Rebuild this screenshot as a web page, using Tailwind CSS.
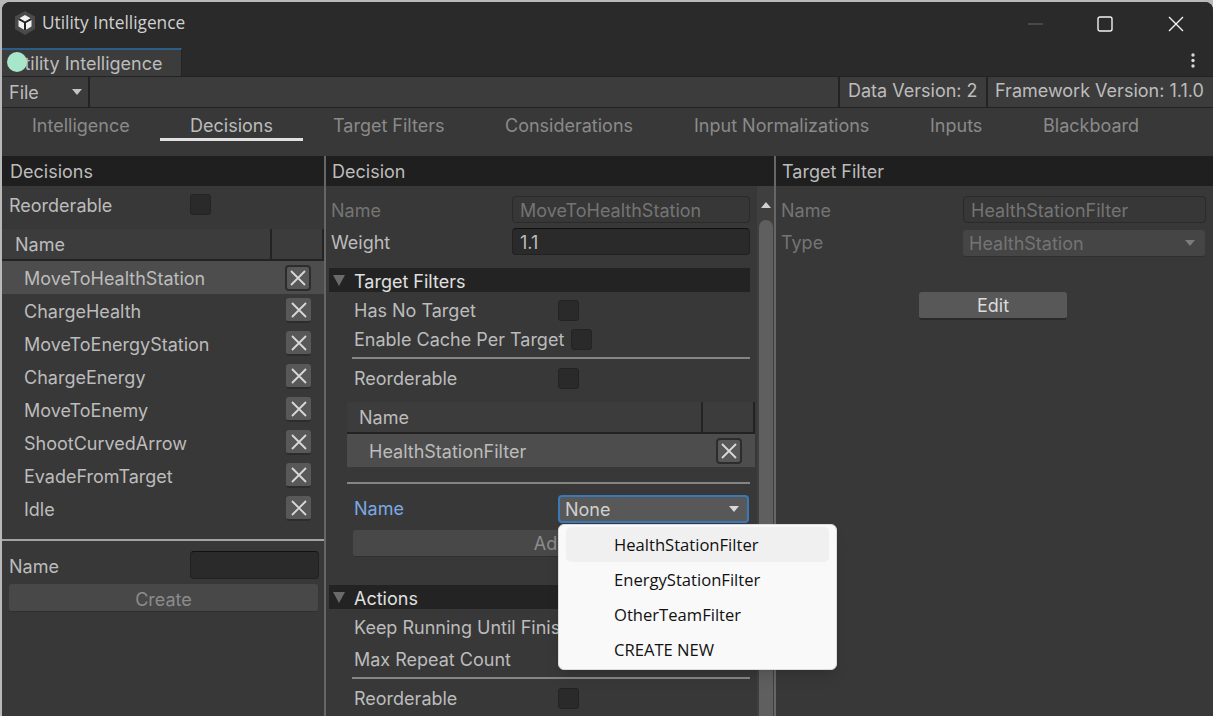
<!DOCTYPE html>
<html lang="en">
<head>
  <meta charset="UTF-8" />
  <title>Utility Intelligence</title>
  <script src="https://cdn.jsdelivr.net/npm/@tailwindcss/browser@4"></script>
</head>
<body class="bg-[#b9b9b9] h-[716px] w-[1213px] overflow-hidden font-['Inter',sans-serif] text-[18px] text-[#bcbcbc]">
  <div class="relative ml-[2px] mt-[2px] h-[714px] w-[1211px] rounded-t-lg bg-[#383838] overflow-hidden">

    <!-- Title bar -->
    <div class="h-[46px] bg-[#2a2a2a] flex items-start">
      <svg class="ml-[12px] mt-[9px] w-[22px] h-[24px]" viewBox="0 0 22 24">
        <path d="M11 0 21 5.5V18L11 24 1 18V5.500Z" fill="#4a4a4a"/>
        <path d="M11 4 17.500 7.800V15.500L11 19.300 4.500 15.500V7.800Z" fill="#f2f2f2"/>
        <path d="M11 11.500V19M11 11.500 4.500 7.800M11 11.500 17.500 7.800" stroke="#222" stroke-width="2" fill="none"/>
      </svg>
      <span class="ml-[6px] mt-[9px] w-[143px] font-['Open_Sans',sans-serif] text-[17.300px] leading-[24px] text-[#d0d0d0] whitespace-nowrap">Utility Intelligence</span>
      <svg class="ml-[843px] mt-[21px] w-[15px] h-[2px]" viewBox="0 0 15 2"><path d="M0 1H15" stroke="#666"/></svg>
      <svg class="ml-[54px] mt-[14px] w-[16px] h-[16px]" viewBox="0 0 16 16"><rect x="1" y="1" width="14" height="14" rx="2" fill="none" stroke="#f2f2f2" stroke-width="1.400"/></svg>
      <svg class="ml-[54px] mt-[13px] w-[18px] h-[18px]" viewBox="0 0 18 18"><path d="M2 2 16 16M16 2 2 16" stroke="#f2f2f2" stroke-width="1.400"/></svg>
    </div>

    <!-- Window tab strip -->
    <div class="h-[28px] bg-[#2a2a2a] flex justify-between">
      <div class="w-[180px] h-[28px] bg-[#3c3c3c] border-t-[2px] border-[#2c5d87] border-r border-r-[#232323] pl-[9px] leading-[27px] overflow-hidden whitespace-nowrap">Utility Intelligence</div>
      <svg class="mt-[4px] mr-[18px] w-[4px] h-[16px]" viewBox="0 0 4 16"><circle cx="2" cy="3" r="1.700" fill="#d8d8d8"/><circle cx="2" cy="8.500" r="1.700" fill="#d8d8d8"/><circle cx="2" cy="14" r="1.700" fill="#d8d8d8"/></svg>
    </div>

    <!-- Toolbar -->
    <div class="h-[32px] bg-[#3c3c3c] border-y border-[#232323] flex">
      <div class="w-[88px] border-r-[2px] border-[#232323] flex items-center justify-between pl-[7px] pr-[6px]">
        <span>File</span>
        <span class="w-0 h-0 border-x-[5px] border-x-transparent border-t-[6px] border-t-[#c4c4c4]"></span>
      </div>
      <div class="flex-1"></div>
      <div class="w-[150px] border-x-[2px] border-[#232323] flex items-center pl-[8px] whitespace-nowrap pb-[4px]">Data Version: 2</div>
      <div class="w-[225px] flex items-center pl-[7px] whitespace-nowrap pb-[4px]">Framework Version: 1.1.0</div>
    </div>

    <!-- Tab row -->
    <div class="h-[48px] flex text-[#8a8a8a]">
      <div class="ml-[30px] w-[97px] pt-[5px] leading-[26px] text-center whitespace-nowrap">Intelligence</div>
      <div class="ml-[31px] w-[143px] h-[33px] pt-[5px] leading-[26px] text-center border-b-[3px] border-[#e0e0e0] text-[#bcbcbc]">Decisions</div>
      <div class="ml-[30px] w-[111px] pt-[5px] leading-[26px] text-center whitespace-nowrap">Target Filters</div>
      <div class="ml-[61px] w-[128px] pt-[5px] leading-[26px] text-center whitespace-nowrap">Considerations</div>
      <div class="ml-[61px] w-[175px] pt-[5px] leading-[26px] text-center whitespace-nowrap">Input Normalizations</div>
      <div class="ml-[61px] w-[52px] pt-[5px] leading-[26px] text-center whitespace-nowrap">Inputs</div>
      <div class="ml-[61px] w-[95px] pt-[5px] leading-[26px] text-center whitespace-nowrap">Blackboard</div>
    </div>

    <!-- Panels -->
    <div class="flex h-[560px]">

      <!-- Decisions list -->
      <div class="w-[322px] shrink-0">
        <div class="h-[30px] bg-[#1f1f1f] pl-[8px] leading-[32px]">Decisions</div>
        <div class="h-[43px] pl-[7px] flex items-start pt-[4px]">
          <span class="w-[181px] leading-[32px]">Reorderable</span>
          <span class="mt-[4px] w-[21px] h-[21px] rounded-[3px] bg-[#2a2a2a] border border-[#232323]"></span>
        </div>
        <div class="h-[32px] bg-[#3c3c3c] border-b-[2px] border-[#232323] flex">
          <div class="w-[270px] pl-[13px] leading-[32px] border-r-[2px] border-[#232323]">Name</div>
          <div class="flex-1 border-r-[2px] border-[#232323]"></div>
        </div>
        <div class="h-[33px] bg-[#4d4d4d] flex items-center justify-between pl-[22px] pr-[13px]">
          <span class="pt-[2px]">MoveToHealthStation</span>
          <span class="w-[26px] h-[26px] rounded-[4px] bg-[#585858] border-[2px] border-[#2c2c2c] flex items-center justify-center"><svg class="w-[16px] h-[16px]" viewBox="0 0 16 16"><path d="M1 1 15 15M15 1 1 15" stroke="#d8d8d8" stroke-width="1.800"/></svg></span>
        </div>
        <div class="h-[33px] flex items-center justify-between pl-[22px] pr-[13px]">
          <span class="pt-[2px]">ChargeHealth</span>
          <span class="w-[25px] h-[25px] rounded-[3px] bg-[#585858] border-b-[2px] border-[#2c2c2c] flex items-center justify-center"><svg class="w-[16px] h-[16px]" viewBox="0 0 16 16"><path d="M1 1 15 15M15 1 1 15" stroke="#d8d8d8" stroke-width="1.800"/></svg></span>
        </div>
        <div class="h-[33px] flex items-center justify-between pl-[22px] pr-[13px]">
          <span class="pt-[2px]">MoveToEnergyStation</span>
          <span class="w-[25px] h-[25px] rounded-[3px] bg-[#585858] border-b-[2px] border-[#2c2c2c] flex items-center justify-center"><svg class="w-[16px] h-[16px]" viewBox="0 0 16 16"><path d="M1 1 15 15M15 1 1 15" stroke="#d8d8d8" stroke-width="1.800"/></svg></span>
        </div>
        <div class="h-[33px] flex items-center justify-between pl-[22px] pr-[13px]">
          <span class="pt-[2px]">ChargeEnergy</span>
          <span class="w-[25px] h-[25px] rounded-[3px] bg-[#585858] border-b-[2px] border-[#2c2c2c] flex items-center justify-center"><svg class="w-[16px] h-[16px]" viewBox="0 0 16 16"><path d="M1 1 15 15M15 1 1 15" stroke="#d8d8d8" stroke-width="1.800"/></svg></span>
        </div>
        <div class="h-[33px] flex items-center justify-between pl-[22px] pr-[13px]">
          <span class="pt-[2px]">MoveToEnemy</span>
          <span class="w-[25px] h-[25px] rounded-[3px] bg-[#585858] border-b-[2px] border-[#2c2c2c] flex items-center justify-center"><svg class="w-[16px] h-[16px]" viewBox="0 0 16 16"><path d="M1 1 15 15M15 1 1 15" stroke="#d8d8d8" stroke-width="1.800"/></svg></span>
        </div>
        <div class="h-[33px] flex items-center justify-between pl-[22px] pr-[13px]">
          <span class="pt-[2px]">ShootCurvedArrow</span>
          <span class="w-[25px] h-[25px] rounded-[3px] bg-[#585858] border-b-[2px] border-[#2c2c2c] flex items-center justify-center"><svg class="w-[16px] h-[16px]" viewBox="0 0 16 16"><path d="M1 1 15 15M15 1 1 15" stroke="#d8d8d8" stroke-width="1.800"/></svg></span>
        </div>
        <div class="h-[33px] flex items-center justify-between pl-[22px] pr-[13px]">
          <span class="pt-[2px]">EvadeFromTarget</span>
          <span class="w-[25px] h-[25px] rounded-[3px] bg-[#585858] border-b-[2px] border-[#2c2c2c] flex items-center justify-center"><svg class="w-[16px] h-[16px]" viewBox="0 0 16 16"><path d="M1 1 15 15M15 1 1 15" stroke="#d8d8d8" stroke-width="1.800"/></svg></span>
        </div>
        <div class="h-[33px] flex items-center justify-between pl-[22px] pr-[13px]">
          <span class="pt-[2px]">Idle</span>
          <span class="w-[25px] h-[25px] rounded-[3px] bg-[#585858] border-b-[2px] border-[#2c2c2c] flex items-center justify-center"><svg class="w-[16px] h-[16px]" viewBox="0 0 16 16"><path d="M1 1 15 15M15 1 1 15" stroke="#d8d8d8" stroke-width="1.800"/></svg></span>
        </div>
        <div class="mt-[14px] h-[2px] bg-[#a3a3a3]"></div>
        <div class="mt-[10px] h-[33px] flex pl-[7px]">
          <span class="w-[181px] leading-[32px]">Name</span>
          <span class="w-[129px] h-[28px] rounded-[4px] bg-[#2a2a2a] border border-[#212121] border-t-[#111]"></span>
        </div>
        <div class="ml-[7px] w-[309px] h-[28px] rounded-[3px] bg-[#484848] border-b border-[#2f2f2f] text-center leading-[31px] text-[#8c8c8c]">Create</div>
      </div>

      <!-- Splitter -->
      <div class="w-[2px] bg-[#666666] shrink-0"></div>

      <!-- Decision detail -->
      <div class="w-[448px] shrink-0 flex flex-col">
        <div class="h-[30px] bg-[#1f1f1f] pl-[6px] leading-[32px]">Decision</div>
        <div class="flex flex-1 min-h-0">
          <div class="w-[431px] shrink-0 pt-[10px]">
            <div class="h-[27px] flex pl-[5px] text-[#747474]">
              <span class="w-[181px] leading-[30px]">Name</span>
              <span class="w-[238px] h-[27px] rounded-[4px] bg-[#373737] border border-[#2a2a2a] pl-[7px] leading-[28px]">MoveToHealthStation</span>
            </div>
            <div class="mt-[5px] h-[27px] flex pl-[5px]">
              <span class="w-[181px] leading-[29px]">Weight</span>
              <span class="w-[238px] h-[27px] rounded-[4px] bg-[#2a2a2a] border border-[#212121] border-t-[#111] pl-[7px] leading-[27px]">1.1</span>
            </div>
            <div class="mt-[13px] ml-[3px] w-[421px] h-[24px] bg-[#232323] flex items-center text-[#e0e0e0]">
              <span class="ml-[4px] w-0 h-0 border-x-[6.500px] border-x-transparent border-t-[11px] border-t-[#6a6a6a]"></span>
              <span class="ml-[9px] pt-[2px]">Target Filters</span>
            </div>
            <div class="h-[29px] mt-[4px] flex items-center pl-[28px]">
              <span class="w-[204px]">Has No Target</span>
              <span class="w-[21px] h-[21px] rounded-[3px] bg-[#2a2a2a] border border-[#232323]"></span>
            </div>
            <div class="h-[29px] flex items-center pl-[28px]">
              <span class="w-[217px] whitespace-nowrap">Enable Cache Per Target</span>
              <span class="w-[21px] h-[21px] rounded-[3px] bg-[#2a2a2a] border border-[#232323]"></span>
            </div>
            <div class="mt-[3px] ml-[26px] w-[398px] h-[2px] bg-[#858585]"></div>
            <div class="h-[38px] flex items-center pl-[28px]">
              <span class="w-[204px]">Reorderable</span>
              <span class="w-[21px] h-[21px] rounded-[3px] bg-[#2a2a2a] border border-[#232323]"></span>
            </div>
            <div class="mt-[5px] ml-[21px] w-[408px] h-[32px] bg-[#3c3c3c] border-b-[2px] border-[#232323] flex">
              <div class="w-[356px] pl-[12px] leading-[32px] border-r-[2px] border-[#232323]">Name</div>
              <div class="flex-1 border-r-[2px] border-[#232323]"></div>
            </div>
            <div class="ml-[21px] w-[408px] h-[33px] bg-[#4d4d4d] flex items-center justify-between pl-[22px] pr-[13px]">
              <span class="pt-[2px]">HealthStationFilter</span>
              <span class="w-[26px] h-[26px] rounded-[4px] bg-[#585858] border-[2px] border-[#2c2c2c] flex items-center justify-center"><svg class="w-[16px] h-[16px]" viewBox="0 0 16 16"><path d="M1 1 15 15M15 1 1 15" stroke="#d8d8d8" stroke-width="1.800"/></svg></span>
            </div>
            <div class="mt-[15px] ml-[21px] w-[403px] h-[2px] bg-[#858585]"></div>
            <div class="mt-[11px] h-[28px] flex pl-[28px]">
              <span class="w-[204px] leading-[28px] text-[#7ba9e4]">Name</span>
              <span class="w-[191px] h-[28px] rounded-[4px] bg-[#585858] border-[2px] border-[#3a78b8] flex items-center justify-between pl-[5px] pr-[8px] text-[#d0d0d0]">None<span class="w-0 h-0 border-x-[5px] border-x-transparent border-t-[6px] border-t-[#d8d8d8]"></span></span>
            </div>
            <div class="mt-[7px] ml-[27px] w-[396px] h-[27px] rounded-[3px] bg-[#484848] border-b border-[#2f2f2f] text-center leading-[27px] text-[#8c8c8c]">Add</div>
            <div class="mt-[28px] ml-[3px] w-[421px] h-[24px] bg-[#232323] flex items-center text-[#e0e0e0]">
              <span class="ml-[4px] w-0 h-0 border-x-[6.500px] border-x-transparent border-t-[11px] border-t-[#6a6a6a]"></span>
              <span class="ml-[9px] pt-[2px]">Actions</span>
            </div>
            <div class="h-[36px] flex items-center pl-[28px] whitespace-nowrap">Keep Running Until Finished</div>
            <div class="h-[28px] flex items-center pl-[28px]">Max Repeat Count</div>
            <div class="mt-[4px] ml-[26px] w-[398px] h-[2px] bg-[#858585]"></div>
            <div class="h-[38px] flex items-center pl-[28px]">
              <span class="w-[204px]">Reorderable</span>
              <span class="w-[21px] h-[21px] rounded-[3px] bg-[#2a2a2a] border border-[#232323]"></span>
            </div>
          </div>
          <!-- Scrollbar -->
          <div class="w-[17px] shrink-0 bg-[#3f3f3f] flex flex-col items-center pt-[16px]">
            <span class="w-0 h-0 border-x-[5px] border-x-transparent border-b-[6px] border-b-[#d0d0d0]"></span>
            <span class="mt-[12px] w-[14px] flex-1 rounded-t-[7px] bg-[#5f5f5f]"></span>
          </div>
        </div>
      </div>

      <!-- Splitter -->
      <div class="w-[2px] bg-[#666666] shrink-0"></div>

      <!-- Target filter -->
      <div class="flex-1">
        <div class="h-[30px] bg-[#1f1f1f] pl-[6px] leading-[32px]">Target Filter</div>
        <div class="mt-[10px] h-[27px] flex pl-[5px] text-[#747474]">
          <span class="w-[182px] leading-[30px]">Name</span>
          <span class="w-[243px] h-[27px] rounded-[4px] bg-[#373737] border border-[#2a2a2a] pl-[7px] leading-[28px]">HealthStationFilter</span>
        </div>
        <div class="mt-[7px] h-[27px] flex pl-[5px] text-[#747474]">
          <span class="w-[182px] leading-[26px]">Type</span>
          <span class="w-[242px] h-[27px] rounded-[3px] bg-[#454545] border-b border-[#2f2f2f] flex items-center justify-between pl-[6px] pr-[10px]">HealthStation<span class="w-0 h-0 border-x-[5px] border-x-transparent border-t-[6px] border-t-[#7c7c7c]"></span></span>
        </div>
        <div class="mt-[35px] ml-[143px] w-[148px] h-[28px] rounded-[3px] bg-[#585858] border-b-[2px] border-[#2a2a2a] text-center leading-[28px] text-[#dcdcdc]">Edit</div>
      </div>
    </div>

    <!-- Dropdown menu, over the form -->
    <div class="absolute left-[556px] top-[522px] w-[279px] h-[146px] rounded-[6px] bg-[#f9f9f9] border border-[#dcdcdc] shadow-lg px-[7px] pt-[2px] font-['Open_Sans',sans-serif] text-[16.600px] text-[#111]">
      <div class="h-[35px] rounded-[5px] bg-[#f0f0f0] pl-[48px] leading-[36px]">HealthStationFilter</div>
      <div class="h-[35px] pl-[48px] leading-[36px]">EnergyStationFilter</div>
      <div class="h-[35px] pl-[48px] leading-[36px]">OtherTeamFilter</div>
      <div class="h-[35px] pl-[48px] leading-[36px]">CREATE NEW</div>
    </div>

    <!-- Pointer highlight -->
    <div class="absolute left-[5px] top-[50px] w-[20px] h-[20px] rounded-full bg-[#a8e6cc]"></div>
  </div>
</body>
</html>
